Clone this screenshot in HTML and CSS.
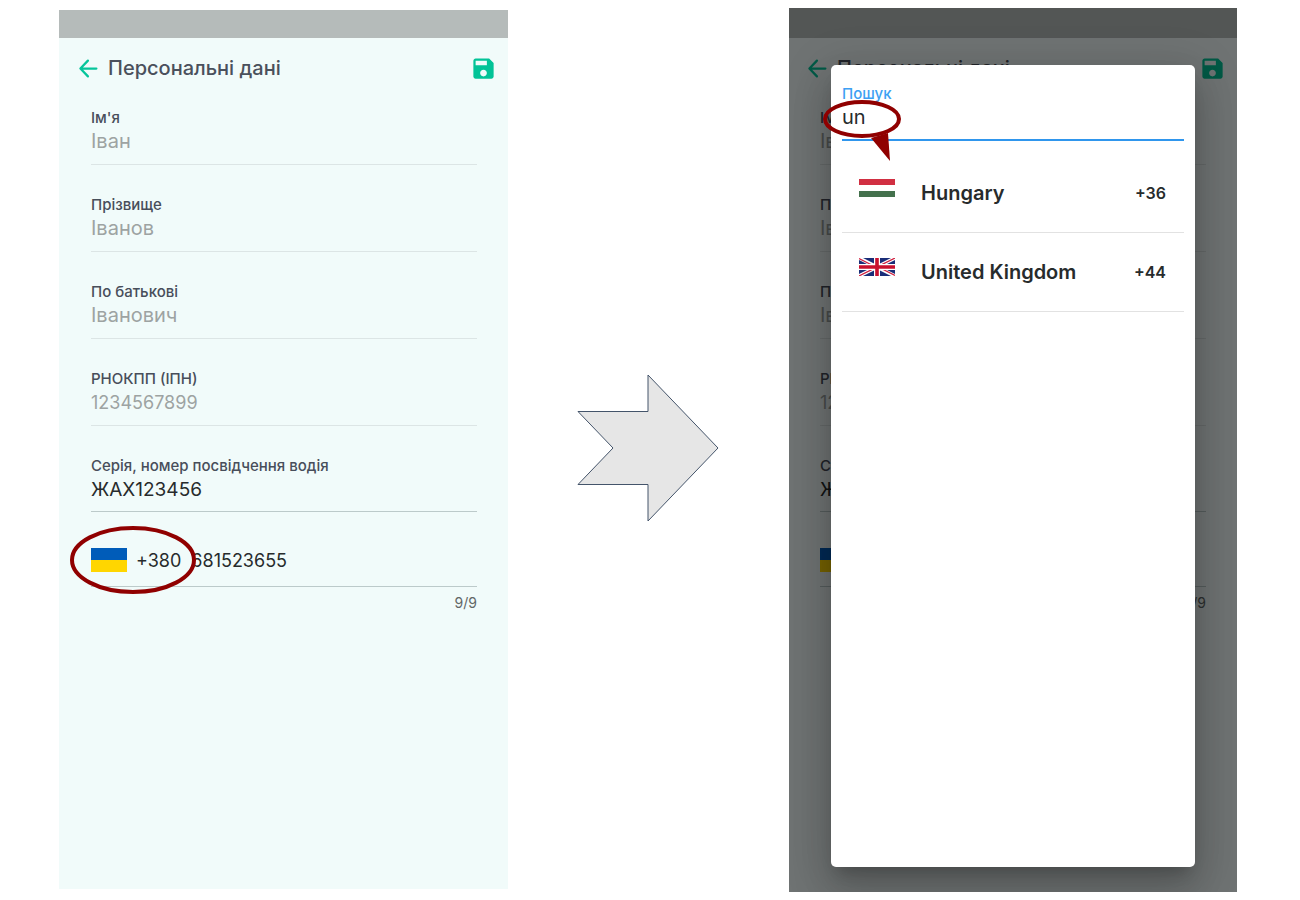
FILE: index.html
```html
<!DOCTYPE html>
<html lang="uk">
<head>
<meta charset="utf-8">
<meta name="viewport" content="width=device-width, initial-scale=1">
<title>Персональні дані</title>
<link rel="stylesheet" href="styles.css">
</head>
<body>
<main class="board">
  <section class="phone">
    <div class="status"></div>
    <header class="bar">
      <button class="icon-btn" type="button" aria-label="Назад"><svg class="icon" viewBox="0 0 24 24"><path class="back" d="M19 12H5M11.500 5L4.800 12l6.700 7"/></svg></button>
      <h1 class="title">Персональні дані</h1>
      <button class="icon-btn" type="button" aria-label="Зберегти"><svg class="icon" viewBox="0 0 24 24"><path class="save" d="M17 3H5c-1.100 0-2 .9-2 2v14c0 1.100.9 2 2 2h14c1.100 0 2-.9 2-2V7l-4-4zm-5 16c-1.660 0-3-1.340-3-3s1.340-3 3-3 3 1.340 3 3-1.340 3-3 3zm3-10H5V5h10v4z"/></svg></button>
    </header>
    <form class="form">
      <div class="field"><label class="label" for="a1">Ім'я</label><input class="value value-text" id="a1" value="Іван" disabled></div>
      <div class="field"><label class="label" for="a2">Прізвище</label><input class="value value-text" id="a2" value="Іванов" disabled></div>
      <div class="field"><label class="label" for="a3">По батькові</label><input class="value value-text" id="a3" value="Іванович" disabled></div>
      <div class="field"><label class="label" for="a4">РНОКПП (ІПН)</label><input class="value" id="a4" value="1234567899" disabled></div>
      <div class="field field-active"><label class="label" for="a5">Серія, номер посвідчення водія</label><input class="value" id="a5" value="ЖАХ123456"></div>
      <div class="tel">
        <div class="tel-row">
          <button class="code" type="button"><span class="flag flag-ua"></span>+380</button>
          <input class="value" type="tel" aria-label="Номер телефону" value="681523655">
          <svg class="ring" viewBox="0 0 126 68"><ellipse cx="63" cy="34" rx="61" ry="32"/></svg>
        </div>
        <p class="count">9/9</p>
      </div>
    </form>
  </section>

  <svg class="arrow" viewBox="0 0 142 148"><path d="M1 37.500H71V1L141 74L71 147V110.500H1L36 74Z"/></svg>

  <section class="phone phone-tall">
    <div class="status"></div>
    <header class="bar">
      <button class="icon-btn" type="button" aria-label="Назад"><svg class="icon" viewBox="0 0 24 24"><path class="back" d="M19 12H5M11.500 5L4.800 12l6.700 7"/></svg></button>
      <h2 class="title">Персональні дані</h2>
      <button class="icon-btn" type="button" aria-label="Зберегти"><svg class="icon" viewBox="0 0 24 24"><path class="save" d="M17 3H5c-1.100 0-2 .9-2 2v14c0 1.100.9 2 2 2h14c1.100 0 2-.9 2-2V7l-4-4zm-5 16c-1.660 0-3-1.340-3-3s1.340-3 3-3 3 1.340 3 3-1.340 3-3 3zm3-10H5V5h10v4z"/></svg></button>
    </header>
    <form class="form">
      <div class="field"><label class="label" for="b1">Ім'я</label><input class="value value-text" id="b1" value="Іван" disabled></div>
      <div class="field"><label class="label" for="b2">Прізвище</label><input class="value value-text" id="b2" value="Іванов" disabled></div>
      <div class="field"><label class="label" for="b3">По батькові</label><input class="value value-text" id="b3" value="Іванович" disabled></div>
      <div class="field"><label class="label" for="b4">РНОКПП (ІПН)</label><input class="value" id="b4" value="1234567899" disabled></div>
      <div class="field field-active"><label class="label" for="b5">Серія, номер посвідчення водія</label><input class="value" id="b5" value="ЖАХ123456"></div>
      <div class="tel">
        <div class="tel-row">
          <button class="code" type="button"><span class="flag flag-ua"></span>+380</button>
          <input class="value" type="tel" aria-label="Номер телефону" value="681523655">
        </div>
        <p class="count">9/9</p>
      </div>
    </form>
    <div class="shade">
      <div class="dialog" role="dialog" aria-label="Вибір країни">
        <div class="search">
          <label class="search-label" for="q">Пошук</label>
          <input class="value value-text" id="q" value="un">
          <svg class="callout" viewBox="0 0 78 62"><path d="M48 38L65 33L67 61Z"/><ellipse cx="39" cy="19" rx="37" ry="17"/></svg>
        </div>
        <ul class="list">
          <li class="item"><span class="flag flag-hu"></span><span class="name">Hungary</span><span class="dial">+36</span></li>
          <li class="item">
            <svg class="flag flag-small" viewBox="0 0 60 30" preserveAspectRatio="none">
              <path fill="#1a2d78" d="M0 0h60v30H0z"/>
              <path stroke="#fff" stroke-width="6" d="M0 0l60 30M60 0L0 30"/>
              <path stroke="#d0203f" stroke-width="2" d="M0 1l28 14M60 29L32 15M60 0L32 14M0 30l28-14"/>
              <path stroke="#fff" stroke-width="10" d="M30 0v30M0 15h60"/>
              <path stroke="#c8102e" stroke-width="6" d="M30 0v30M0 15h60"/>
            </svg>
            <span class="name">United Kingdom</span><span class="dial">+44</span>
          </li>
        </ul>
      </div>
    </div>
  </section>
</main>
</body>
</html>
```
FILE: styles.css
```css
* { box-sizing: border-box; }
body {
  margin: 0;
  background: #fff;
  color: #272b2c;
  font-family: Inter, "Open Sans", sans-serif;
}
button, input { font: inherit; color: inherit; border: 0; padding: 0; background: none; }

.board {
  display: grid;
  grid-template-columns: 449fr 281fr 448fr;
  min-height: 100vh;
  padding: 8px 63px 8px 59px;
}
.phone {
  position: relative;
  margin: 2px 0 3px;
  background: #f1fbfa;
}
.phone-tall { margin: 0; }
.status { height: 28px; background: #b5bbba; }
.phone-tall .status { height: 30px; }

.bar {
  display: flex;
  align-items: center;
  height: 62px;
  padding: 0 11px 2px 16px;
}
.icon-btn { display: flex; }
.icon { width: 27px; height: 27px; }
.back { fill: none; stroke: #06c59b; stroke-width: 2; stroke-linecap: round; stroke-linejoin: round; }
.save { fill: #02c397; }
.title {
  flex: 1;
  margin: 0 0 0 6px;
  color: #4a505c;
  font-size: 20px;
  font-weight: 500;
}

.form {
  display: flex;
  flex-direction: column;
  gap: 30px;
  padding: 8px 31px 0 32px;
}
.phone-tall .bar { padding-left: 15px; }
.phone-tall .form { padding-left: 31px; }
.field {
  display: flex;
  flex-direction: column;
  padding-bottom: 10px;
  border-bottom: 1px solid #dce5e5;
}
.label { color: #484e5a; font-size: 15px; font-weight: 500; line-height: 20px; }
.value {
  width: 100%;
  height: 26px;
  font-size: 18px;
  outline: 0;
}
.value-text { font-size: 20px; }
.value:disabled { color: #9da3a2; opacity: 1; }
.field-active { padding-bottom: 9px; border-color: #bccaca; }
.field-active .value { font-size: 19px; }
.tel-row {
  position: relative;
  display: flex;
  align-items: center;
  gap: 10px;
  height: 45px;
  padding-bottom: 8px;
  border-bottom: 1px solid #bccaca;
}
.code { display: flex; align-items: center; gap: 9px; font-size: 18px; }
.flag { flex: none; width: 36px; height: 24px; }
.flag-ua { background: linear-gradient(#005cb9 50%, #ffd600 50%); }
.count {
  margin: 6px 0 0;
  color: #626766;
  font-size: 14px;
  line-height: 20px;
  text-align: right;
}
.ring {
  position: absolute;
  left: -21px;
  top: -16px;
  width: 126px;
  height: 68px;
  fill: none;
  stroke: #900000;
  stroke-width: 4;
}

.arrow {
  place-self: center;
  width: 142px;
  height: 148px;
  margin: 0 2px 4px 0;
  fill: #e6e6e6;
  stroke: #44546a;
}

.shade {
  position: absolute;
  inset: 0;
  display: flex;
  padding: 57px 42px 25px;
  background: rgba(0, 0, 0, 0.54);
  overflow: hidden;
}
.dialog {
  flex: 1;
  padding: 19px 11px;
  border-radius: 5px;
  background: #fff;
  box-shadow: 0 11px 15px -7px rgba(0, 0, 0, 0.2), 0 24px 38px 3px rgba(0, 0, 0, 0.14), 0 9px 46px 8px rgba(0, 0, 0, 0.12);
}
.search {
  position: relative;
  display: flex;
  flex-direction: column;
  padding-bottom: 9px;
  border-bottom: 2px solid #2f96ed;
}
.search-label { color: #3da0f3; font-size: 15px; font-weight: 500; line-height: 20px; }
.callout {
  position: absolute;
  left: -19px;
  top: 16px;
  width: 78px;
  height: 62px;
}
.callout path { fill: #900000; }
.callout ellipse { fill: none; stroke: #900000; stroke-width: 4; }
.list { margin: 0; padding: 13px 0 0; list-style: none; }
.item {
  display: flex;
  align-items: center;
  height: 79px;
  padding: 0 18px 0 17px;
  border-bottom: 1px solid #e2e2e2;
  font-weight: 600;
}
.flag-hu, .flag-small { height: 18px; margin-bottom: 10px; }
.flag-hu { background: linear-gradient(#d12f42 33%, #fff 33% 67%, #44714d 67%); }
.name { flex: 1; margin-left: 26px; font-size: 20px; }
.dial { font-size: 16px; }
```
